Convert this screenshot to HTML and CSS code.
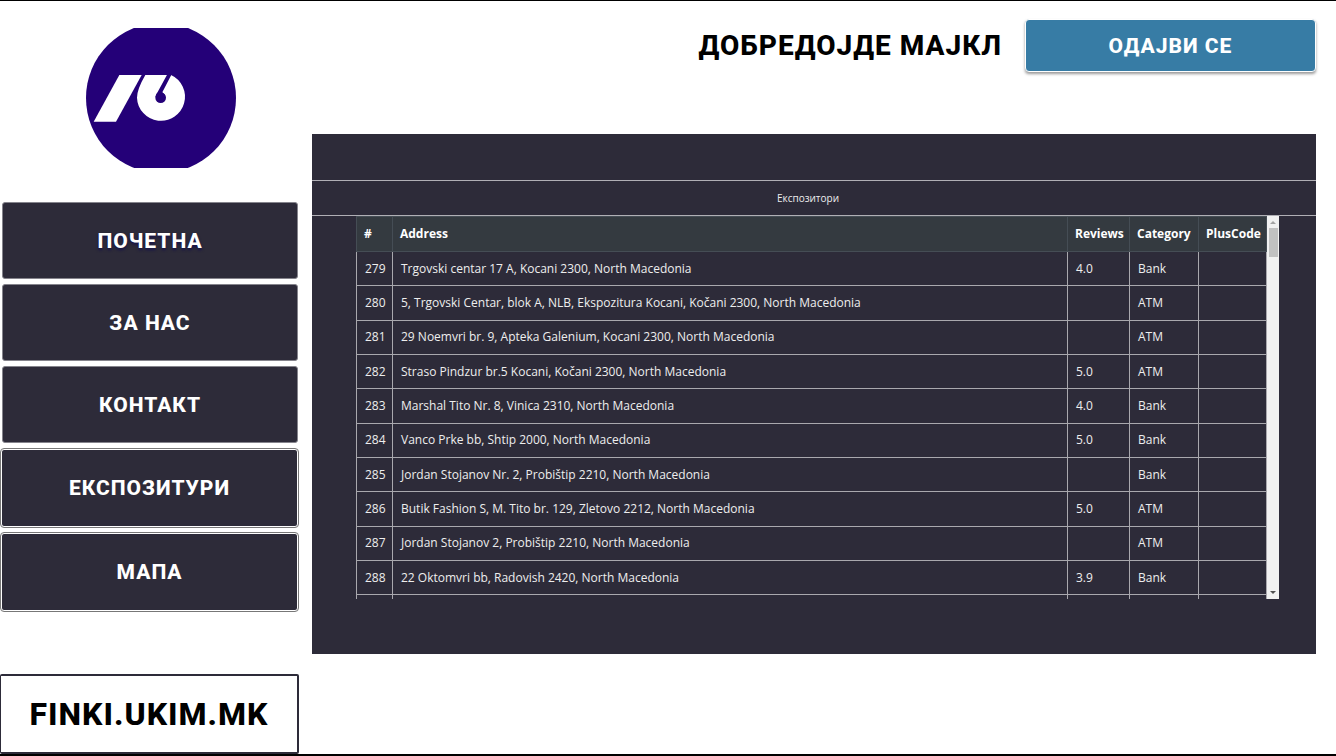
FILE: index.html
```html
<!DOCTYPE html>
<html lang="mk">
<head>
<meta charset="utf-8">
<meta name="viewport" content="width=device-width, initial-scale=1">
<title>Експозитури</title>
<link rel="stylesheet" href="styles.css">
</head>
<body>
<div class="page">
  <aside class="sidebar">
    <svg class="logo" viewBox="48 54 450 420" role="img" aria-label="Logo">
      <circle cx="273" cy="264" r="225" fill="#240078"/>
      <path d="M148 195H215L138 335H71Z" fill="#fff"/>
      <path d="M226 195H303A72 72 0 1 1 201 263Q201 238 226 195Z" fill="#fff"/>
      <path d="M292 193H305L277 247L286 256L256 262Q257 252 263 246Z" fill="#240078"/>
      <circle cx="272" cy="263" r="16" fill="#240078"/>
    </svg>
    <nav class="menu">
      <button class="menu-item menu-item-active" type="button">ПОЧЕТНА</button>
      <button class="menu-item" type="button">ЗА НАС</button>
      <button class="menu-item" type="button">КОНТАКТ</button>
      <button class="menu-item menu-item-framed" type="button">ЕКСПОЗИТУРИ</button>
      <button class="menu-item menu-item-framed" type="button">МАПА</button>
    </nav>
    <a class="site-link" href="#">FINKI.UKIM.MK</a>
  </aside>
  <main class="main">
    <header class="topbar">
      <h1 class="welcome">ДОБРЕДОЈДЕ МАЈКЛ</h1>
      <button class="logout" type="button">ОДАЈВИ СЕ</button>
    </header>
    <section class="panel">
      <h2 class="panel-title">Експозитори</h2>
      <div class="table-area">
        <div class="table-view">
          <table class="branches">
            <colgroup><col class="col-id"><col><col class="col-reviews"><col class="col-category"><col class="col-plus"></colgroup>
            <thead><tr><th>#</th><th>Address</th><th>Reviews</th><th>Category</th><th>PlusCode</th></tr></thead>
            <tbody>
              <tr><td>279</td><td>Trgovski centar 17 A, Kocani 2300, North Macedonia</td><td>4.0</td><td>Bank</td><td></td></tr>
              <tr><td>280</td><td>5, Trgovski Centar, blok A, NLB, Ekspozitura Kocani, Kočani 2300, North Macedonia</td><td></td><td>ATM</td><td></td></tr>
              <tr><td>281</td><td>29 Noemvri br. 9, Apteka Galenium, Kocani 2300, North Macedonia</td><td></td><td>ATM</td><td></td></tr>
              <tr><td>282</td><td>Straso Pindzur br.5 Kocani, Kočani 2300, North Macedonia</td><td>5.0</td><td>ATM</td><td></td></tr>
              <tr><td>283</td><td>Marshal Tito Nr. 8, Vinica 2310, North Macedonia</td><td>4.0</td><td>Bank</td><td></td></tr>
              <tr><td>284</td><td>Vanco Prke bb, Shtip 2000, North Macedonia</td><td>5.0</td><td>Bank</td><td></td></tr>
              <tr><td>285</td><td>Jordan Stojanov Nr. 2, Probištip 2210, North Macedonia</td><td></td><td>Bank</td><td></td></tr>
              <tr><td>286</td><td>Butik Fashion S, M. Tito br. 129, Zletovo 2212, North Macedonia</td><td>5.0</td><td>ATM</td><td></td></tr>
              <tr><td>287</td><td>Jordan Stojanov 2, Probištip 2210, North Macedonia</td><td></td><td>ATM</td><td></td></tr>
              <tr><td>288</td><td>22 Oktomvri bb, Radovish 2420, North Macedonia</td><td>3.9</td><td>Bank</td><td></td></tr>
              <tr class="row-next"><td></td><td></td><td></td><td></td><td></td></tr>
            </tbody>
          </table>
        </div>
        <div class="scrollbar" aria-hidden="true">
          <svg class="arrow" viewBox="0 0 12 12"><path d="M3 8L6 5L9 8Z" fill="#a3a3a3"/></svg>
          <div class="thumb"></div>
          <svg class="arrow arrow-down" viewBox="0 0 12 12"><path d="M3 4L6 7L9 4Z" fill="#505050"/></svg>
        </div>
      </div>
    </section>
  </main>
</div>
</body>
</html>
```
FILE: styles.css
```css
* { box-sizing: border-box; }

body {
  margin: 0;
  background: #fff;
  color: #000;
  font-family: Roboto, "Liberation Sans", sans-serif;
}

.page {
  display: grid;
  grid-template-columns: 299px 1fr;
  column-gap: 13px;
  min-height: 100vh;
  border-top: 1px solid #000;
  border-bottom: 2px solid #000;
}

.sidebar {
  display: flex;
  flex-direction: column;
  padding-top: 27px;
}

.logo {
  display: block;
  width: 150px;
  height: 140px;
  margin-left: 86px;
}

.menu {
  display: flex;
  flex-direction: column;
  gap: 5px;
  margin-top: 34px;
}

.menu-item {
  height: 77px;
  margin: 0 1px 0 2px;
  padding: 0;
  border: 1px solid #85848c;
  border-radius: 3px;
  background: #2d2b39;
  color: #fff;
  font: 800 21px/26px Roboto, sans-serif;
  letter-spacing: 1px;
}

.menu-item-active { text-shadow: 0 2px 3px #14104a; }

.menu-item-framed {
  height: 78px;
  margin: 1px 1px 0;
  border-color: #fff;
  outline: 1px solid #777;
}

.site-link {
  margin-top: auto;
  padding: 20px 0;
  border: 2px solid #2d2b39;
  border-left-width: 1px;
  border-radius: 2px;
  color: #000;
  font-size: 32px;
  font-weight: 800;
  line-height: 36px;
  letter-spacing: 1px;
  text-align: center;
  text-decoration: none;
}

.main { padding: 18px 20px 0 0; }

.topbar {
  display: flex;
  align-items: center;
  justify-content: flex-end;
  gap: 23px;
}

.welcome {
  margin: 0;
  font-size: 28px;
  font-weight: 800;
  line-height: 32px;
  letter-spacing: 1px;
}

.logout {
  width: 291px;
  height: 53px;
  padding: 0;
  border: 1px solid #fff;
  border-radius: 4px;
  background: #377ca5;
  color: #fff;
  box-shadow: 0 2px 3px rgba(0, 0, 0, 0.4);
  font: 800 21px/24px Roboto, sans-serif;
  letter-spacing: 1px;
}

.panel {
  margin-top: 62px;
  padding: 46px 0 55px;
  background: #2d2b39;
  color: #eee;
  font-family: "Open Sans", "Noto Sans", sans-serif;
}

.panel-title {
  margin: 0;
  padding-right: 12px;
  border: 1px solid #b0afb5;
  border-width: 1px 0;
  font-size: 10px;
  font-weight: 400;
  line-height: 34px;
  text-align: center;
}

.table-area {
  display: flex;
  padding: 0 37px 0 44px;
}

.table-view {
  flex: 1;
  overflow: hidden;
}

.branches {
  width: 100%;
  height: 383px;
  border-collapse: collapse;
  table-layout: fixed;
  font-size: 12px;
  line-height: 18px;
}

.col-id { width: 36px; }
.col-reviews { width: 62px; }
.col-category { width: 69px; }
.col-plus { width: 68px; }

.branches th,
.branches td {
  height: 34px;
  padding: 0 8px;
  border: 1px solid #a9a8ae;
  text-align: left;
  white-space: nowrap;
}

.branches th {
  height: 35px;
  padding: 0 7px;
  border-color: #454d55;
  background: #343a40;
  color: #fff;
}

.branches .row-next td {
  height: 4px;
  border-bottom: 0;
}

.scrollbar {
  display: flex;
  flex-direction: column;
  width: 12px;
  background: #f1f1f1;
}

.arrow {
  display: block;
  width: 12px;
  height: 12px;
}

.arrow-down { margin-top: auto; }

.thumb {
  width: 9px;
  height: 29px;
  margin: 0 auto;
  background: #c1c1c1;
}
```
